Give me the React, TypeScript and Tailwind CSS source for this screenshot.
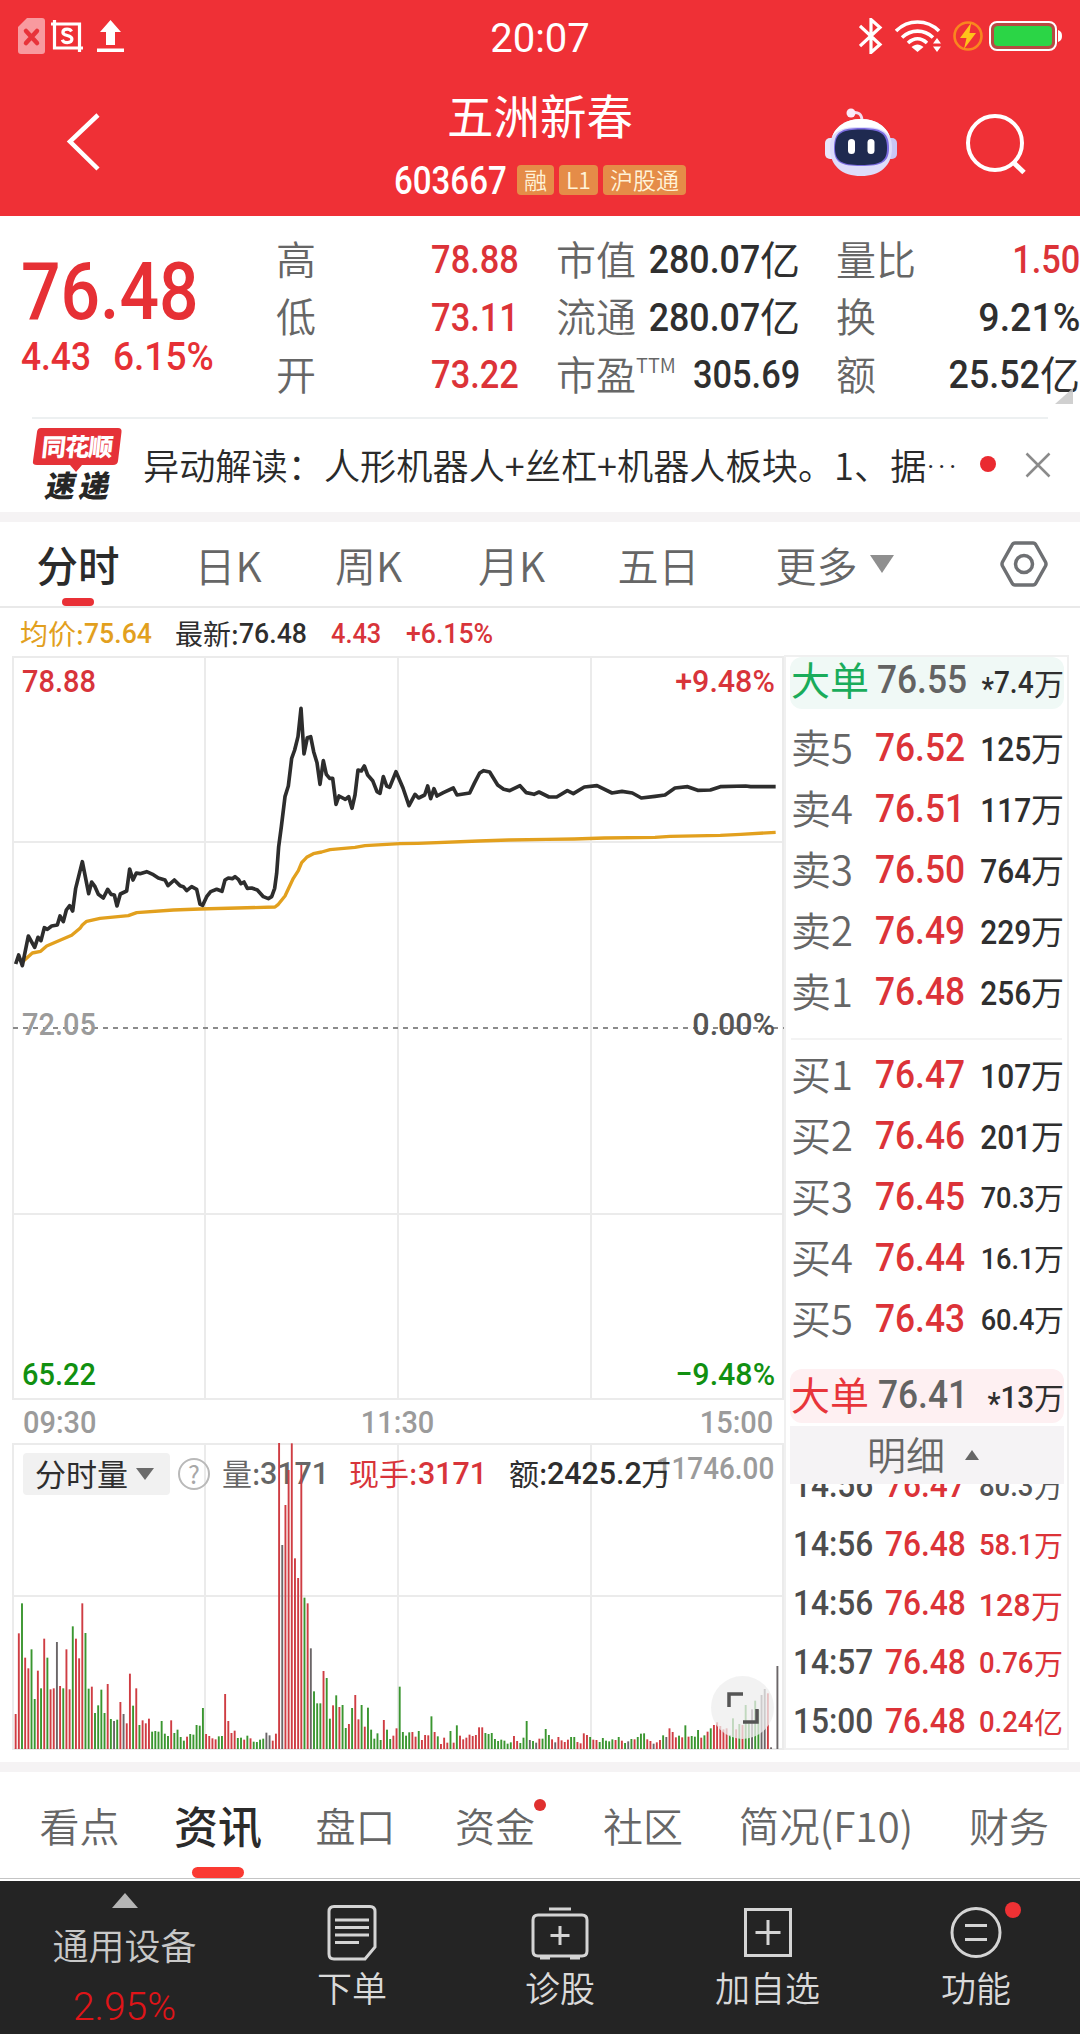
import type { ReactNode } from "react";
import { clsx } from "clsx";

type Tone = "r" | "g" | "k";

const TONES: Record<Tone, string> = { r: "#cf3d43", g: "#3a9630", k: "#6b6668" };

// One entry per trading minute.
const VOLUME = [
  105, 347, 437, 274, 242, 299, 150, 235, 182, 331, 274, 179, 182, 321, 189, 182, 299, 179, 368, 331,
  272, 437, 348, 181, 187, 108, 131, 178, 108, 195, 90, 84, 88, 141, 105, 77, 226, 130, 182, 72,
  86, 77, 91, 52, 54, 52, 84, 46, 39, 86, 48, 58, 36, 25, 37, 45, 43, 72, 70, 123,
  45, 39, 32, 29, 38, 39, 165, 84, 48, 55, 33, 34, 28, 40, 32, 22, 21, 28, 31, 49,
  41, 25, 46, 921, 612, 732, 837, 917, 572, 513, 852, 454, 437, 302, 173, 137, 137, 234, 213, 91,
  131, 161, 126, 132, 63, 75, 123, 162, 89, 132, 67, 124, 58, 31, 47, 27, 87, 58, 30, 40,
  62, 187, 51, 40, 50, 51, 37, 54, 27, 42, 41, 98, 51, 38, 15, 34, 19, 54, 19, 71,
  40, 29, 34, 43, 39, 42, 65, 65, 48, 45, 48, 30, 24, 28, 25, 16, 20, 39, 24, 18,
  34, 84, 27, 24, 19, 31, 31, 60, 42, 29, 20, 36, 26, 21, 28, 36, 36, 21, 17, 47,
  42, 36, 28, 27, 21, 33, 25, 23, 29, 27, 36, 25, 18, 23, 30, 29, 36, 46, 47, 29,
  24, 16, 20, 27, 41, 36, 62, 51, 35, 40, 35, 71, 37, 39, 37, 57, 34, 41, 52, 62,
  72, 80, 69, 59, 62, 42, 92, 59, 75, 72, 132, 77, 119, 145, 117, 162, 180, 167, 5, 0, 249,
];

const VOLUME_TONES =
  "rrgrrggrgrgrrkrgrrgr" +
  "rrggrggggrgkgrkrrgrg" +
  "rrrggggggrggggrggggg" +
  "rrrrggrrrrggrgrggggk" +
  "krrrkrrrrrrgrkgggrgg" +
  "rgrggrgrrgrgggggrggr" +
  "rggggrrgrrrgrgrrrgrg" +
  "rrrrrrrrgggggggggrrg" +
  "ggkgkrgggrkrrrrggrrr" +
  "rgrrgggggrgrgkgrgggr" +
  "rkrrgkrrrgrgrgggrgrg" +
  "rrrrrggrgrggkggkkrkkk";

// Price curves, in thirds of a pixel.
const PRICE =
  "47,852 56,825 67,857 85,768 104,802 114,772 123,782 133,743 142,748 155,738 172,735 180,708 190,725 199,690 209,677 218,693 227,625 247,545 266,641 275,606 285,620 295,643 310,654 323,628 333,643 343,645 351,678 361,642 380,633 389,567 399,600 409,579 420,581 440,575 460,584 475,594 495,600 504,617 523,600 540,617 550,620 560,632 575,620 590,628 600,672 608,676 620,650 632,635 650,628 666,634 675,600 685,594 697,596 705,590 715,598 723,611 732,606 742,625 755,624 772,630 790,650 805,656 815,650 824,625 830,580 836,500 844,440 855,350 865,318 875,235 884,210 894,170 903,85 912,222 922,173 932,170 941,215 951,248 960,313 970,242 979,283 989,295 998,295 1008,373 1017,348 1036,358 1046,350 1056,385 1065,345 1074,270 1084,273 1093,258 1103,285 1118,302 1131,335 1140,340 1150,290 1160,318 1169,322 1188,275 1209,324 1227,377 1245,343 1256,354 1274,345 1283,318 1292,356 1302,326 1311,348 1330,338 1360,324 1371,345 1409,339 1424,308 1439,279 1451,272 1469,276 1493,315 1511,328 1529,332 1560,317 1579,338 1602,343 1617,336 1647,351 1670,351 1702,332 1720,341 1753,321 1791,317 1836,339 1866,334 1897,339 1924,354 1965,349 1995,345 2025,324 2063,320 2093,331 2131,330 2161,320 2237,318 2252,320 2327,320";

const AVERAGE =
  "67,846 97,819 122,814 140,798 180,781 215,766 240,745 247,735 260,724 300,715 385,707 410,698 520,690 600,687 825,681 835,673 855,648 880,595 895,572 905,548 920,532 940,521 965,516 990,509 1065,502 1095,497 1200,491 1254,490 1436,483 1526,480 1640,478 1723,477 1813,474 1965,472 2010,469 2161,466 2222,463 2327,457";

const ASKS = [
  ["卖5", "76.52", "125"],
  ["卖4", "76.51", "117"],
  ["卖3", "76.50", "764"],
  ["卖2", "76.49", "229"],
  ["卖1", "76.48", "256"],
];

const BIDS = [
  ["买1", "76.47", "107"],
  ["买2", "76.46", "201"],
  ["买3", "76.45", "70.3"],
  ["买4", "76.44", "16.1"],
  ["买5", "76.43", "60.4"],
];

const TICKS = [
  { time: "14:56", price: "76.47", amount: "80.3", unit: "万", dark: true },
  { time: "14:56", price: "76.48", amount: "58.1", unit: "万" },
  { time: "14:56", price: "76.48", amount: "128", unit: "万" },
  { time: "14:57", price: "76.48", amount: "0.76", unit: "万" },
  { time: "15:00", price: "76.48", amount: "0.24", unit: "亿" },
];

const SQUEEZE = {
  tight: "scale-x-[.87]",
  normal: "scale-x-[.905]",
  wide: "scale-x-95",
};

// Figures are set slightly condensed.
function Num({
  children,
  className,
  squeeze = "normal",
}: {
  children: ReactNode;
  className?: string;
  squeeze?: keyof typeof SQUEEZE;
}) {
  return (
    <span
      className={clsx(
        "inline-block shrink-0 whitespace-nowrap font-['Roboto',sans-serif] font-medium",
        SQUEEZE[squeeze],
        className,
      )}
    >
      {children}
    </span>
  );
}

function StatusBar() {
  return (
    <div className="flex h-[72px] items-center">
      <div className="flex w-[360px] items-center pl-[18px]">
        <svg className="h-9 w-[27px]" viewBox="0 0 27 36">
          <path d="M9 0h15a3 3 0 0 1 3 3v30a3 3 0 0 1-3 3H3a3 3 0 0 1-3-3V9z" fill="#f89a9f" />
          <path d="m8 13 11 12M19 13 8 25" stroke="#e8333a" strokeWidth="4.5" strokeLinecap="round" />
        </svg>
        <svg className="ml-1.5 h-8 w-8" viewBox="0 0 32 32" fill="none" stroke="#fff" strokeWidth="3.2">
          <path d="M0 4h28.5v28M3.5 0v28H32" />
          <path d="M20.5 11.5c-.8-1.600-2.200-2.300-4.400-2.300-2.500 0-4.200 1.200-4.200 3.100 0 4.600 9 1.900 9 6.800 0 2.200-1.900 3.500-4.700 3.500-2.500 0-4.200-1-4.900-2.900" />
        </svg>
        <svg className="ml-3.5 h-8 w-[27px]" viewBox="0 0 27 32" fill="#fff">
          <path d="M13.5 0 24 12h-6v13H9V12H3zM0 28.500h27V32H0z" />
        </svg>
      </div>
      <div className="flex-1 pt-[5px] text-center font-['Roboto',sans-serif] text-[40px] font-normal leading-none">
        20:07
      </div>
      <div className="flex w-[360px] items-center justify-end pr-[18px]">
        <svg className="h-9 w-6" viewBox="0 0 24 36" fill="none" stroke="#fff" strokeWidth="3.2">
          <path d="m1 8 20 18.500-9 8V1.500l9 8L1 28" />
        </svg>
        <svg className="ml-3 h-8 w-[46px]" viewBox="0 0 46 32" fill="none" stroke="#fff" strokeWidth="3.6">
          <path d="M1 11c12-12 31-12 43 0M7 17.500c9-8.500 22-8.500 31 0M13 23c6-5.500 13-5.500 19 0" />
          <path d="M16.500 27c4-3.500 8-3.500 12 0l-6 5z" fill="#fff" stroke="none" />
          <path d="m42 18 4 5.500h-8zM42 32l4-5.500h-8z" fill="#fff" stroke="none" />
        </svg>
        <svg className="ml-3 h-[30px] w-[30px]" viewBox="0 0 30 30">
          <circle cx="15" cy="15" r="13.5" fill="none" stroke="#f9861f" strokeWidth="2.6" />
          <path d="M18 2 7 17h6.500L11 28l12-16h-6.500z" fill="#ffc21a" />
        </svg>
        <svg className="ml-1.5 h-[30px] w-[73px]" viewBox="0 0 73 30">
          <rect x="1" y="1" width="66" height="28" rx="7" fill="#b84a42" stroke="#fff" strokeWidth="2" />
          <rect x="5" y="5" width="58" height="20" rx="4" fill="#2bd546" />
          <path d="M69 9c3 1 4 3 4 6s-1 5-4 6z" fill="#fff" />
        </svg>
      </div>
    </div>
  );
}

function Robot() {
  return (
    <svg className="h-[68px] w-[72px]" viewBox="0 0 72 68">
      <path d="M26 5c7-2 11 1 11 8" fill="none" stroke="#f3dcf0" strokeWidth="3" />
      <circle cx="26" cy="5" r="4.5" fill="#fbeafa" />
      <rect x="0" y="30" width="12" height="21" rx="5" fill="#e9e6fb" />
      <rect x="60" y="30" width="12" height="21" rx="5" fill="#c9c6f5" />
      <path d="M36 11c19 0 31 12 31 29 0 18-12 28-31 28S5 58 5 40c0-17 12-29 31-29z" fill="#dedcfa" />
      <path d="M36 11c15 0 25 7 29 18-6-9-15-10-29-10S13 20 7 29c4-11 14-18 29-18z" fill="#fff" />
      <path d="M36 20c19 0 28 3 28 20 0 14-7 18-28 18S9 54 9 40c0-17 8-20 27-20z" fill="#7b6be0" />
      <path d="M36 21.500c18 0 26 3 26 18.500 0 13-6 17-26 17s-26-4-26-17c0-15.500 8-18.500 26-18.500z" fill="#1f2a50" />
      <rect x="23" y="31" width="7" height="15" rx="3.5" fill="#fff" />
      <rect x="42.5" y="31" width="7" height="15" rx="3.5" fill="#fff" />
    </svg>
  );
}

function Badge({ children }: { children: ReactNode }) {
  return (
    <span className="flex h-[30px] items-center rounded bg-[#e58c48] px-[7px] pb-0.5 text-[23px] leading-none text-[#fff3d8]">
      {children}
    </span>
  );
}

function Header() {
  return (
    <header className="h-[216px] bg-[#ef3036] text-white">
      <StatusBar />
      <div className="flex h-36">
        <div className="w-[300px] pl-[66px] pt-[41px]">
          <svg className="h-[58px] w-[34px]" viewBox="0 0 34 58" fill="none" stroke="#fff" strokeWidth="4.5">
            <path d="M32 2 4 28.500 32 56" />
          </svg>
        </div>
        <div className="flex w-[480px] flex-col items-center">
          <h1 className="mt-[18px] text-[46.5px] font-normal leading-[48px]">五洲新春</h1>
          <div className="mt-[26px] flex items-center gap-[5px]">
            <Num squeeze="tight" className="w-[118px] origin-left pt-0.5 text-[38px] leading-[30px]">
              603667
            </Num>
            <Badge>融</Badge>
            <Badge>L1</Badge>
            <Badge>沪股通</Badge>
          </div>
        </div>
        <div className="flex flex-1 pl-[45px]">
          <div className="pt-[36px]">
            <Robot />
          </div>
          <svg className="ml-[68px] mt-[41px] h-[62px] w-[62px]" viewBox="0 0 62 62" fill="none" stroke="#fff" strokeWidth="4">
            <circle cx="30" cy="30" r="27" />
            <path d="m48 49 11 10.500" strokeWidth="5" />
          </svg>
        </div>
      </div>
    </header>
  );
}

function Stat({ label, value, unit, red, sup }: { label: string; value: string; unit?: string; red?: boolean; sup?: string }) {
  const squeeze = value.endsWith("%") ? "wide" : unit ? "normal" : "tight";
  return (
    <div className="flex h-[57.5px] items-center justify-between text-[40px] leading-none">
      <span className="flex pb-1 text-[#666]">
        {label}
        {sup && <span className="text-[20px] leading-6">{sup}</span>}
      </span>
      <span className={clsx("flex items-center", red ? "text-[#dc3338]" : "text-[#2f2f2f]")}>
        <Num squeeze={squeeze} className="origin-right text-[39.5px]">
          {value}
        </Num>
        {unit && <span className="pb-1 font-normal">{unit}</span>}
      </span>
    </div>
  );
}

function Quote() {
  return (
    <section className="relative flex h-[201px] pt-[15px]">
      <div className="w-[276px] pl-[21px] text-[#e63035]">
        <div className="mt-7 h-[66px]">
          <Num squeeze="tight" className="origin-left text-[80px] leading-[66px]">
            76.48
          </Num>
        </div>
        <div className="mt-[11px] flex h-[42px] text-[39px] leading-[42px]">
          <Num className="w-[92px] origin-left">4.43</Num>
          <Num squeeze="wide" className="origin-left">
            6.15%
          </Num>
        </div>
      </div>
      <div className="w-[243px]">
        <Stat label="高" value="78.88" red />
        <Stat label="低" value="73.11" red />
        <Stat label="开" value="73.22" red />
      </div>
      <div className="ml-[37px] w-[244px]">
        <Stat label="市值" value="280.07" unit="亿" />
        <Stat label="流通" value="280.07" unit="亿" />
        <Stat label="市盈" sup="TTM" value="305.69" />
      </div>
      <div className="ml-[36px] w-[244px]">
        <Stat label="量比" value="1.50" red />
        <Stat label="换" value="9.21%" />
        <Stat label="额" value="25.52" unit="亿" />
      </div>
      <svg className="absolute bottom-[13px] right-[7px] h-4 w-[18px]" viewBox="0 0 18 16">
        <path d="M18 0v16H0z" fill="#c8c8c8" fillOpacity=".85" />
      </svg>
    </section>
  );
}

function News() {
  return (
    <section className="mx-8 flex h-[95px] border-t-2 border-[#edf0f1]">
      <div className="relative mt-[9px] h-[74px] w-[90px] shrink-0">
        <svg className="absolute inset-0 h-full w-full" viewBox="0 0 90 74">
          <path d="M9 0h77q4 0 3.500 4L86 33q-.5 4-5 4H50l-6 7-6-7H5q-5 0-4-4L5 4q.5-4 4-4z" fill="#e53238" />
        </svg>
        <div className="relative flex h-9 -skew-x-6 items-center justify-center text-[24.5px] font-black leading-none tracking-[-1px] text-white">
          同花顺
        </div>
        <div className="relative flex h-9 -skew-x-12 items-center justify-center gap-1 pb-px pl-1 pt-1 text-[30px] font-black leading-none text-[#262626]">
          <span>速</span>
          <span>递</span>
        </div>
      </div>
      <div className="ml-[21px] w-[818px] shrink-0 whitespace-nowrap text-[36.2px] leading-[91px] text-[#2a2a2a]">
        异动解读：人形机器人+丝杠+机器人板块。1、据
        <span className="font-['Roboto',sans-serif] tracking-[2px]">···</span>
      </div>
      <div className="ml-[19px] mt-[37px] h-4 w-4 shrink-0 rounded-full bg-[#ea2a30]" />
      <svg className="ml-[29px] mt-[33px] h-[26px] w-[26px] shrink-0" viewBox="0 0 26 26" stroke="#8b8b8b" strokeWidth="2.5">
        <path d="m1.500 1.500 23 23M24.500 1.500l-23 23" />
      </svg>
    </section>
  );
}

function ChartTabs() {
  return (
    <nav className="flex h-[86px] border-b-2 border-[#e9e9e9] text-[41px] leading-[84px] text-[#666]">
      <div className="flex w-[156px] flex-col items-center text-[#2b2b2b]">
        <span className="h-[76px] text-[41.5px] font-medium">分时</span>
        <span className="h-2 w-8 rounded bg-[#e93036]" />
      </div>
      <span className="w-[144px] text-center">日K</span>
      <span className="w-[137px] text-center">周K</span>
      <span className="w-[149px] text-center">月K</span>
      <span className="w-[145px] text-center">五日</span>
      <span className="flex w-[207px] items-center justify-center gap-3">
        更多
        <svg className="h-[18px] w-6" viewBox="0 0 24 18">
          <path d="M0 0h24L12 18z" fill="#8f8f8f" />
        </svg>
      </span>
      <span className="flex flex-1 items-center justify-end pr-8">
        <svg className="h-[50px] w-12" viewBox="0 0 48 50" fill="none" stroke="#6e7073" strokeWidth="3.5">
          <path d="M15 4h18q2 0 3 2l9.500 17q1 2 0 4L36 44q-1 2-3 2H15q-2 0-3-2L2.500 27q-1-2 0-4L12 6q1-2 3-2z" />
          <circle cx="24" cy="25" r="8.5" />
        </svg>
      </span>
    </nav>
  );
}

function PriceChart() {
  return (
    <div className="relative h-[744px]">
      <svg className="block h-full w-full" viewBox="0 0 784 744" fill="none">
        <g stroke="#ebebeb" strokeWidth="2">
          <path d="M13 1h771M13 186h771M13 558h771M13 743h771" />
          <path d="M13 0v744M205 0v744M398 0v744M591 0v744M783 0v744" />
        </g>
        <path d="M13 372h771" stroke="#8b8b8b" strokeWidth="2" strokeDasharray="5 5" />
        <g transform="translate(0 24) scale(.33333)" strokeLinejoin="round">
          <polyline points={AVERAGE} stroke="#e2a01e" strokeWidth="10" />
          <polyline points={PRICE} stroke="#2d2d2d" strokeWidth="11" />
        </g>
      </svg>
      <Num className="absolute left-[22px] top-2 origin-left text-[32px] leading-[34px] text-[#d8343a]">78.88</Num>
      <Num squeeze="wide" className="absolute right-[9px] top-2 origin-right text-[32px] leading-[34px] text-[#d8343a]">
        +9.48%
      </Num>
      <Num className="absolute left-[22px] top-[351px] origin-left text-[32px] leading-[34px] text-[#9b9b9b]">72.05</Num>
      <Num squeeze="wide" className="absolute right-[9px] top-[351px] origin-right text-[32px] leading-[34px] text-[#555]">
        0.00%
      </Num>
      <Num className="absolute bottom-[9px] left-[22px] origin-left text-[32px] leading-[34px] text-[#119011]">65.22</Num>
      <Num squeeze="wide" className="absolute bottom-[9px] right-[9px] origin-right text-[32px] leading-[34px] text-[#119011]">
        −9.48%
      </Num>
    </div>
  );
}

function VolumeChart() {
  return (
    <div className="relative h-[307px]">
      <svg className="block h-full w-full" viewBox="0 0 784 307" fill="none">
        <g stroke="#ebebeb" strokeWidth="2">
          <path d="M13 1h771M13 153h771M13 306h771" />
          <path d="M13 0v307M205 0v307M398 0v307M591 0v307M783 0v307" />
        </g>
      </svg>
      <Num squeeze="tight" className="absolute right-[10px] top-2 origin-right text-[32px] leading-[34px] text-[#9b9b9b]">
        11746.00
      </Num>
      <div className="absolute left-[23px] top-2.5 flex h-[42px] items-center whitespace-nowrap text-[30px] font-normal leading-none text-[#2e2e2e]">
        <span className="flex h-full w-[147px] items-center gap-2 rounded bg-[#f1f1f1] pl-3 text-[31px]">
          <span className="pb-1">分时量</span>
          <svg className="h-3 w-[18px]" viewBox="0 0 18 12">
            <path d="M0 0h18l-9 12z" fill="#6b6b6b" />
          </svg>
        </span>
        <span className="ml-2 flex h-8 w-8 items-center justify-center rounded-full border-[2.5px] border-[#b9b9b9] pb-px text-[25px] text-[#a8a8a8]">
          ?
        </span>
        <span className="ml-[12px] flex w-[127px] items-center pb-[3px] text-[#666]">
          <span className="pb-0.5">量:</span>
          <Num squeeze="wide" className="origin-left text-[32px]">
            3171
          </Num>
        </span>
        <span className="flex w-[160px] items-center pb-[3px] text-[#d8343a]">
          <span className="pb-0.5 pr-px">现手:</span>
          <Num squeeze="wide" className="origin-left text-[32px]">
            3171
          </Num>
        </span>
        <span className="flex items-center pb-[3px]">
          <span className="pb-0.5">额:</span>
          <Num squeeze="wide" className="w-[94px] origin-left text-[32px]">
            2425.2
          </Num>
          <span className="pb-0.5">万</span>
        </span>
      </div>
      <svg className="absolute inset-0 h-full w-full" viewBox="0 0 784 307">
        {VOLUME.map((v, i) => (
          <rect
            key={i}
            x={14.7 + i * 3.174}
            y={306 - v / 3}
            width="1.9"
            height={v / 3}
            fill={TONES[VOLUME_TONES[i] as Tone]}
          />
        ))}
      </svg>
      <span className="absolute bottom-[11px] left-[711px] flex h-[63px] w-[63px] items-center justify-center rounded-full bg-[#ededed]/75">
        <svg className="h-8 w-8" viewBox="0 0 32 32" fill="none" stroke="#555" strokeWidth="3.5">
          <path d="M2 15V2h14M30 17v13H16" />
        </svg>
      </span>
    </div>
  );
}

function BigOrder({ price, amount, buy }: { price: string; amount: string; buy?: boolean }) {
  return (
    <div
      className={clsx(
        "ml-1 mr-[3px] flex items-center rounded-xl font-normal leading-none",
        buy ? "mt-[19px] h-[54px] bg-[#fef0f2] pb-0.5 text-[#e8353a]" : "h-[52px] bg-[#f0f9f6] pb-[5px] text-[#1aac5b]",
      )}
    >
      <span className="w-[88px] pb-1 pl-px text-[39px]">大单</span>
      <Num className="origin-left text-[39px] text-[#636363]">{price}</Num>
      <span className="flex flex-1 items-center justify-end pt-1 text-[30px] text-[#2f2f2f]">
        <Num squeeze={buy ? "wide" : "normal"} className="origin-right text-[31px]">
          <span className="inline-block translate-y-1.5">*</span>
          {amount}
        </Num>
        <span className="pb-0.5">万</span>
      </span>
    </div>
  );
}

function BookRow({ row }: { row: string[] }) {
  const [label, price, amount] = row;
  const small = amount.includes(".");
  return (
    <div className="ml-1 mr-[3px] flex h-[61px] items-center leading-none">
      <span className="w-[88px] pb-1.5 pl-px text-[40px] text-[#666]">{label}</span>
      <Num className="origin-left text-[39px] text-[#dc3338]">{price}</Num>
      <span
        className={clsx(
          "flex flex-1 items-center justify-end pt-px font-normal text-[#2f2f2f]",
          small ? "text-[30px]" : "text-[33px]",
        )}
      >
        <Num className="origin-right">{amount}</Num>
        <span className="pb-1">万</span>
      </span>
    </div>
  );
}

function OrderBook() {
  return (
    <aside className="h-[1095px] w-[285px] overflow-hidden border-2 border-[#f0f0f0]">
      <BigOrder price="76.55" amount="7.4" />
      <div className="pt-[9px]">
        {ASKS.map((row) => (
          <BookRow key={row[0]} row={row} />
        ))}
      </div>
      <div className="mx-[5px] mb-[5px] mt-[15px] h-0.5 bg-[#f3f3f3]" />
      <div>
        {BIDS.map((row) => (
          <BookRow key={row[0]} row={row} />
        ))}
      </div>
      <BigOrder price="76.41" amount="13" buy />
      <div className="ml-1 mr-[3px] mt-[3px] flex h-[58px] items-center justify-center gap-5 bg-[#f5f3f5] pr-2 text-[39px] leading-none text-[#666]">
        <span className="pb-1">明细</span>
        <svg className="h-2.5 w-[14px]" viewBox="0 0 14 10">
          <path d="M7 0l7 10H0z" fill="#666" />
        </svg>
      </div>
      <div className="h-[265px] overflow-hidden">
        <div className="-mt-7">
          {TICKS.map((t, i) => (
            <div key={i} className="flex h-[59px] items-center pl-[7px] pr-1 leading-none">
              <Num className="w-[92px] origin-left text-[35px] text-[#4d4d4d]">{t.time}</Num>
              <Num className="origin-left text-[35px] text-[#dc3338]">{t.price}</Num>
              <span
                className={clsx(
                  "flex flex-1 items-center justify-end pt-0.5 font-normal",
                  t.amount.includes(".") ? "text-[29px]" : "text-[32px]",
                  t.dark ? "text-[#555]" : "text-[#dc3338]",
                )}
              >
                <Num squeeze="wide" className="origin-right">
                  {t.amount}
                </Num>
                <span className="pb-0.5">{t.unit}</span>
              </span>
            </div>
          ))}
        </div>
      </div>
    </aside>
  );
}

function SectionTabs() {
  return (
    <nav className="flex h-[107px] overflow-hidden whitespace-nowrap border-b border-[#c4c4c4] text-center text-[40px] leading-[106px] text-[#666]">
      <span className="w-[159px] shrink-0">看点</span>
      <span className="flex w-[118px] shrink-0 flex-col items-center">
        <span className="h-[95px] text-[44px] font-medium text-[#2b2b2b]">资讯</span>
        <span className="h-[11px] w-[52px] rounded-md bg-[#fa3a32]" />
      </span>
      <span className="w-[157px] shrink-0">盘口</span>
      <span className="relative w-[122px] shrink-0">
        资金
        <i className="absolute right-2.5 top-[27px] h-3 w-3 rounded-full bg-[#e0302f]" />
      </span>
      <span className="w-[174px] shrink-0">社区</span>
      <span className="w-[192px] shrink-0 text-[40.5px]">简况(F10)</span>
      <span className="w-[174px] shrink-0">财务</span>
    </nav>
  );
}

function NavItem({ label, className, children }: { label: string; className: string; children: ReactNode }) {
  return (
    <div className={clsx("flex shrink-0 flex-col items-center pt-[23px]", className)}>
      <svg className="h-[58px] w-[60px]" viewBox="0 0 60 58" fill="none" stroke="#d4d4d4" strokeWidth="3">
        {children}
      </svg>
      <span className="mt-[7px] text-[35px] leading-[36px] text-[#dadada]">{label}</span>
    </div>
  );
}

function BottomNav() {
  return (
    <footer className="flex h-[153px] overflow-hidden bg-[#242424]">
      <div className="flex w-[249px] shrink-0 flex-col items-center">
        <svg className="mt-3 h-[15px] w-[26px]" viewBox="0 0 26 15">
          <path d="M13 0l13 15H0z" fill="#b5b5b5" />
        </svg>
        <span className="mt-[18px] text-[36px] leading-[36px] text-[#c9c9c9]">通用设备</span>
        <span className="mt-[25px] font-['Roboto',sans-serif] text-[39px] leading-[40px] text-[#e01418]">2.95%</span>
      </div>
      <NavItem label="下单" className="w-[206px]">
        <path d="M12 2.500h36q5 0 5 5V43L43 55H12q-5 0-5-5V7.500q0-5 5-5z" />
        <path d="M13 16h34M13 23.500h34M13 31h34M13 38.500h24" />
      </NavItem>
      <NavItem label="诊股" className="w-[210px]">
        <path d="M19 5h22M8 11h44q5 0 5 5v31q0 5-5 5H8q-5 0-5-5V16q0-5 5-5z" />
        <path d="M10 54h10M40 54h10" />
        <path d="M30 22v19M20.500 31.500h19" />
      </NavItem>
      <NavItem label="加自选" className="w-[205px]">
        <path d="M7.500 5.500h45v46h-45zM30 16v25M17.500 28.500h25" />
      </NavItem>
      <div className="relative">
        <NavItem label="功能" className="w-[212px]">
          <circle cx="30" cy="28.5" r="24" />
          <path d="M19 21.500h22M19 35.500h22" />
        </NavItem>
        <i className="absolute left-[135px] top-[21px] h-4 w-4 rounded-full bg-[#ee3134]" />
      </div>
    </footer>
  );
}

export default function App() {
  return (
    <div className="h-[2034px] w-[1080px] overflow-hidden bg-white font-['Noto_Sans_CJK_SC',sans-serif] font-[350]">
      <Header />
      <Quote />
      <News />
      <div className="h-2.5 bg-[#f5f3f4]" />
      <ChartTabs />
      <main className="flex h-[1154px]">
        <div className="w-[784px]">
          <div className="flex h-[48px] items-center pl-5 pt-1 text-[28px] font-normal leading-none text-[#2e2e2e]">
            <span className="flex w-[155px] items-center text-[#e2a01e]">
              <span className="pb-0.5">均价:</span>
              <Num squeeze="wide" className="origin-left">
                75.64
              </Num>
            </span>
            <span className="flex w-[156px] items-center">
              <span className="pb-0.5">最新:</span>
              <Num squeeze="wide" className="origin-left">
                76.48
              </Num>
            </span>
            <Num className="w-[75px] origin-left text-[#d8343a]">4.43</Num>
            <Num squeeze="wide" className="origin-left text-[#d8343a]">
              +6.15%
            </Num>
          </div>
          <PriceChart />
          <div className="flex h-[43px] items-center justify-between pl-[23px] pr-[11px] text-[32px] leading-none text-[#9b9b9b]">
            <Num className="origin-left">09:30</Num>
            <Num>11:30</Num>
            <Num className="origin-right">15:00</Num>
          </div>
          <VolumeChart />
        </div>
        <div className="pt-[47px]">
          <OrderBook />
        </div>
      </main>
      <div className="h-2.5 bg-[#f5f3f4]" />
      <SectionTabs />
      <div className="h-0.5" />
      <BottomNav />
    </div>
  );
}
